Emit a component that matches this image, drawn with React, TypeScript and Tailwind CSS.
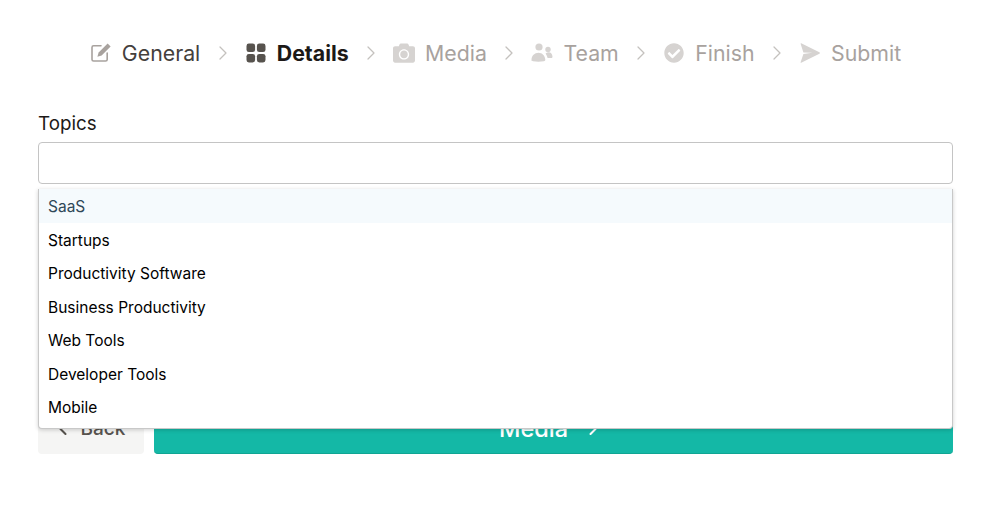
import { ChevronLeft, ChevronRight } from 'lucide-react'
import { FaCamera, FaCheckCircle } from 'react-icons/fa'

const options = ['SaaS', 'Startups', 'Productivity Software', 'Business Productivity', 'Web Tools', 'Developer Tools', 'Mobile']

function EditIcon() {
  return (
    <svg viewBox="0 0 20 20" className="size-5 text-[#a8a29e]" fill="none">
      <path d="M10 2.8H2.6A1.6 1.6 0 0 0 1 4.4v12A1.6 1.6 0 0 0 2.6 18h12a1.6 1.6 0 0 0 1.6-1.6V10" stroke="currentColor" strokeWidth="1.6" strokeLinecap="round" />
      <path d="M16.6.6 19.6 3.6 10.6 12.6 6.4 13.8l1.2-4.2z" fill="currentColor" />
    </svg>
  )
}

function GridIcon() {
  return (
    <svg viewBox="0 0 20 20" className="size-5 text-[#57534e]" fill="currentColor">
      <rect x="0.5" y="0.5" width="8.6" height="8.6" rx="2.4" />
      <rect x="10.9" y="0.5" width="8.6" height="8.6" rx="2.4" />
      <rect x="0.5" y="10.9" width="8.6" height="8.6" rx="2.4" />
      <rect x="10.9" y="10.9" width="8.6" height="8.6" rx="2.4" />
    </svg>
  )
}

function TeamIcon() {
  return (
    <svg viewBox="0 0 22 20" className="h-5 w-[22px] text-[#d6d3d1]" fill="currentColor">
      <circle cx="8" cy="4" r="3.6" />
      <circle cx="17" cy="6.4" r="2.7" />
      <path d="M0.5 17.2c0-4.6 3.2-7.4 7-7.4 3.6 0 6.4 2.8 6.8 6.6.1 1-.5 1.6-1.4 1.8-3.6.6-7.4.6-10.8 0-1-.2-1.6-.4-1.6-1z" />
      <path d="M14.6 10.4c1-.8 2-1.2 3-1.2 2.2 0 3.9 2 3.9 4.6 0 .9-.5 1.3-1.3 1.3h-3.6c-.4-1.8-1-3.4-2-4.7z" />
    </svg>
  )
}

function SendIcon() {
  return (
    <svg viewBox="0 0 20 20" className="size-5 text-[#d6d3d1]" fill="currentColor">
      <path d="M0.6 0.8c-.2-.4.2-.7.6-.6L19.4 9.2c.6.3.6 1.3 0 1.6L1.2 19.8c-.4.2-.8-.2-.6-.6L3.4 11l9-1.2-9-.4z" />
    </svg>
  )
}

const steps = [
  { label: 'General', icon: <EditIcon />, text: 'text-[#44403c]' },
  { label: 'Details', icon: <GridIcon />, text: 'font-bold text-[#1c1917]' },
  { label: 'Media', icon: <FaCamera className="size-[22px] text-[#d6d3d1]" />, text: 'text-[#a8a29e]' },
  { label: 'Team', icon: <TeamIcon />, text: 'text-[#a8a29e]' },
  { label: 'Finish', icon: <FaCheckCircle className="size-5 text-[#d6d3d1]" />, text: 'text-[#a8a29e]' },
  { label: 'Submit', icon: <SendIcon />, text: 'text-[#a8a29e]' },
]

export default function App() {
  return (
    <div className="h-[509px] overflow-hidden bg-white pl-[38px] pr-[47px] pt-[38px] font-['Inter',sans-serif]">
      <nav className="flex items-center justify-center">
        {steps.map((step, i) => (
          <div key={step.label} className="flex items-center">
            {i > 0 ? <ChevronRight strokeWidth={1.25} className="mx-[10.25px] size-6 text-[#c4c1be]" /> : null}
            <span className="flex w-[22px] justify-center">{step.icon}</span>
            <span className={`ml-[10px] text-[21.3px] leading-[30px] ${step.text}`}>{step.label}</span>
          </div>
        ))}
      </nav>

      <div className="relative mt-[42px]">
        <label className="block text-[18.8px] leading-[28px] text-[#1c1917]">Topics</label>
        <input className="mt-[4px] block h-[42px] w-full rounded border border-[#c4c4c4] bg-white" />

        <ul className="absolute inset-x-0 top-[79px] z-10 h-[240px] rounded-b-sm border border-t-0 border-[#c8c8c8] bg-white shadow-[0_1px_4px_rgba(0,0,0,0.18)]">
          {options.map((option, i) => (
            <li key={option} className={`h-[33.5px] px-[9px] text-[15.5px] leading-[35px] ${i === 0 ? 'bg-[#f5fafd] text-[#2f4858]' : 'text-black'}`}>
              {option}
            </li>
          ))}
        </ul>

        <div className="mt-[220px] flex gap-[10px]">
          <button className="flex h-[50px] w-[106px] items-center justify-center gap-2 rounded bg-[#f5f5f4] pr-1 text-[19px] font-medium text-[#57534e]">
            <ChevronLeft className="size-5" strokeWidth={2.5} />
            Back
          </button>
          <button className="flex h-[50px] flex-1 items-center justify-center gap-[15px] rounded border-b border-[#10a593] bg-[#14b8a6] pr-[5px] text-[23.5px] font-medium text-white">
            Media
            <ChevronRight className="size-5" strokeWidth={2.5} />
          </button>
        </div>
      </div>
    </div>
  )
}
